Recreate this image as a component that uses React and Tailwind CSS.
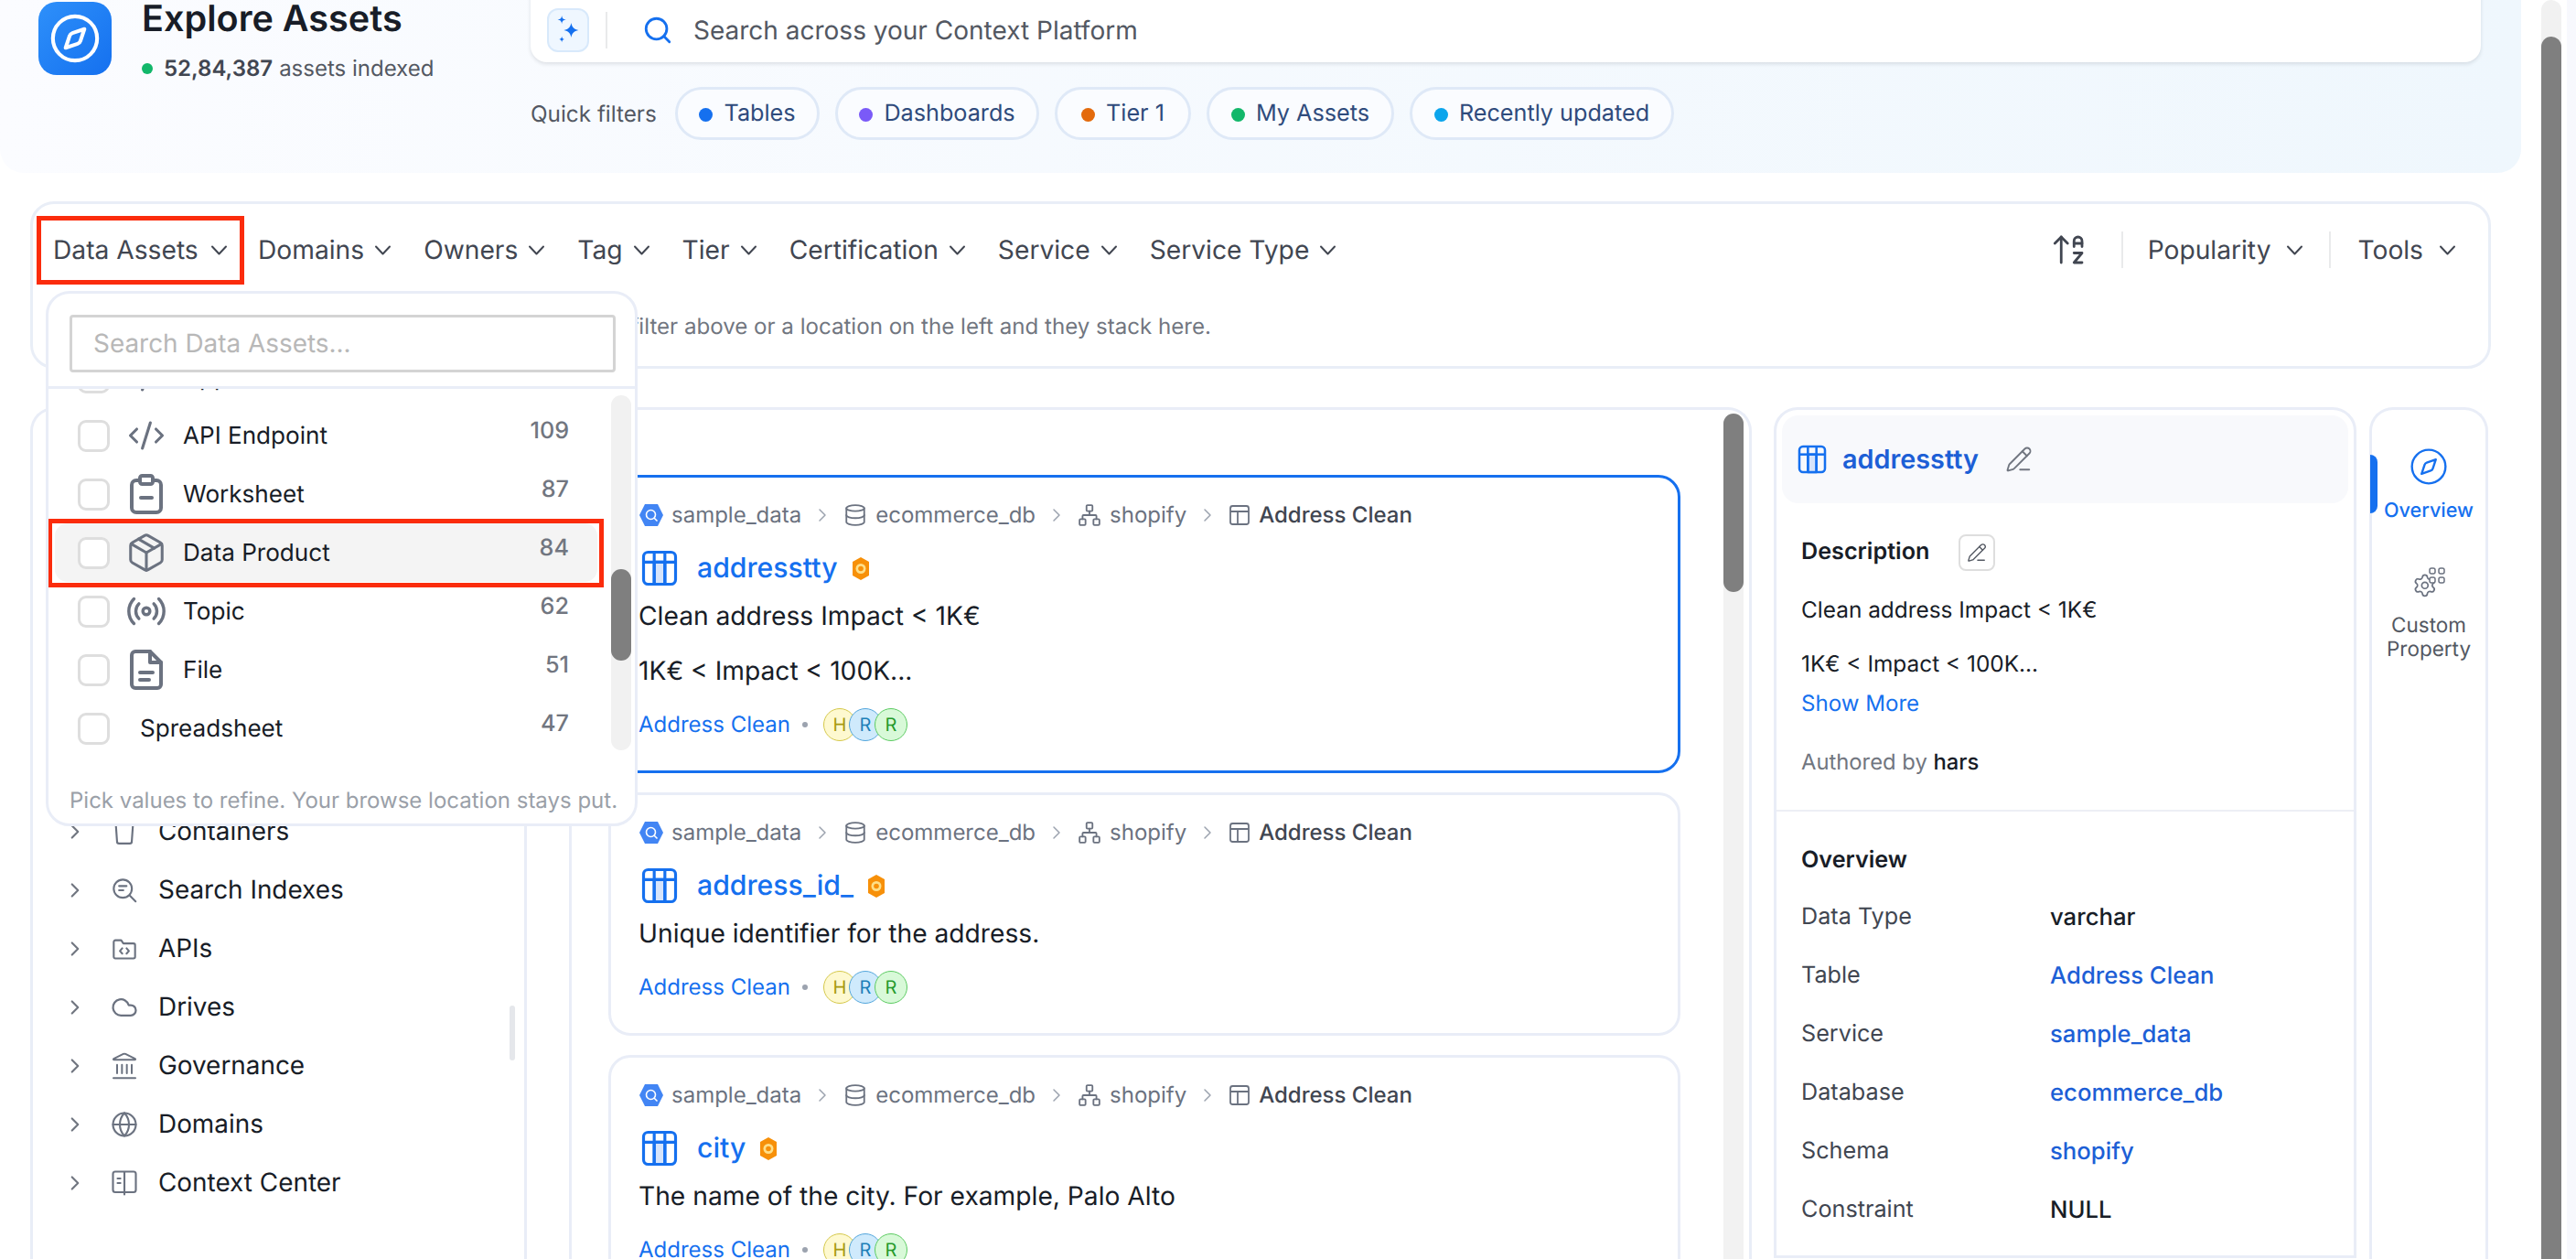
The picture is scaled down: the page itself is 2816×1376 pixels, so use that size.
import React from 'react'
import {
  ArrowUpAZ, ChevronRight, CodeXml, Package, Radio, Cloud, Landmark, Globe,
  Compass, Database, Network, PencilLine, Search,
} from 'lucide-react'

const PILLS = [
  { label: 'Tables', dot: 'bg-[#1570ef]', w: 'w-[158px]' },
  { label: 'Dashboards', dot: 'bg-[#7a5af8]', w: 'w-[223px]' },
  { label: 'Tier 1', dot: 'bg-[#e36a0c]', w: 'w-[149px]' },
  { label: 'My Assets', dot: 'bg-[#12b76a]', w: 'w-[205px]' },
  { label: 'Recently updated', dot: 'bg-[#0ba5ec]', w: 'w-[289px]' },
]

const FILTERS = ['Domains', 'Owners', 'Tag', 'Tier', 'Certification', 'Service', 'Service Type']

const OVERVIEW = [
  { k: 'Data Type', v: 'varchar' },
  { k: 'Table', v: 'Address Clean', link: true },
  { k: 'Service', v: 'sample_data', link: true },
  { k: 'Database', v: 'ecommerce_db', link: true },
  { k: 'Schema', v: 'shopify', link: true },
  { k: 'Constraint', v: 'NULL' },
]

function Caret() {
  return (
    <svg width="19" height="11" viewBox="0 0 19 11" fill="none" stroke="currentColor" strokeWidth="2" strokeLinecap="round" strokeLinejoin="round" className="shrink-0">
      <path d="M2 1.5l7.5 8 7.5-8" />
    </svg>
  )
}

function WorksheetIcon() {
  return (
    <svg width="36" height="44" viewBox="0 0 18 22" fill="none" stroke="#6b7280" strokeWidth="2" strokeLinecap="round" strokeLinejoin="round" className="shrink-0">
      <rect x="1" y="3.5" width="16" height="17.5" rx="2.5" />
      <rect x="5.5" y="1" width="7" height="4.5" rx="1.2" fill="#fff" />
      <path d="M6 13h6" />
    </svg>
  )
}

function FileIcon() {
  return (
    <svg width="36" height="44" viewBox="0 0 18 22" fill="none" stroke="#6b7280" strokeWidth="2" strokeLinecap="round" strokeLinejoin="round" className="shrink-0">
      <path d="M11 1H3a2 2 0 0 0-2 2v16a2 2 0 0 0 2 2h12a2 2 0 0 0 2-2V7z" />
      <path d="M11 1v6h6M5.500 12.500h7M5.500 16.500h5" />
    </svg>
  )
}

function BucketIcon() {
  return (
    <svg width="26" height="30" viewBox="0 0 24 28" fill="none" stroke="#6b7280" strokeWidth="2" strokeLinejoin="round">
      <path d="M3 3l1.5 21a2 2 0 0 0 2 2h11a2 2 0 0 0 2-2L21 3z" />
    </svg>
  )
}

function IndexIcon() {
  return (
    <svg width="28" height="28" viewBox="0 0 24 24" fill="none" stroke="#6b7280" strokeWidth="1.8" strokeLinecap="round">
      <circle cx="10.5" cy="10.5" r="8.5" />
      <path d="M7 8h7M7 12h4M17 17l5.5 5.5" />
    </svg>
  )
}

function FolderCodeIcon() {
  return (
    <svg width="28" height="28" viewBox="0 0 24 24" fill="none" stroke="#6b7280" strokeWidth="1.8" strokeLinecap="round" strokeLinejoin="round">
      <path d="M2 5.5a1.5 1.5 0 0 1 1.5-1.5H9l2 3h9.5A1.5 1.5 0 0 1 22 8.5v11a1.5 1.5 0 0 1-1.5 1.5h-17A1.5 1.5 0 0 1 2 19.5z" />
      <path d="M10 11.5L7.8 14l2.2 2.500M14 11.500l2.200 2.500-2.200 2.500" />
    </svg>
  )
}

function BookIcon() {
  return (
    <svg width="30" height="30" viewBox="0 0 24 24" fill="none" stroke="#6b7280" strokeWidth="1.7" strokeLinecap="round" strokeLinejoin="round">
      <path d="M12 4.500V22M12 20H4a2 2 0 0 1-2-2V4a2 2 0 0 1 2-2h8v2.500M12 4.500V2h8a2 2 0 0 1 2 2v14a2 2 0 0 1-2 2h-8" />
      <path d="M6 8h2.500M6 12h2.500" />
    </svg>
  )
}

function SparkIcon() {
  return (
    <svg width="28" height="32" viewBox="0 0 24 28" fill="#1570ef">
      <path d="M15 7c.7 4 2.500 6.200 7 7-4.500.8-6.300 3-7 7-.7-4-2.500-6.200-7-7 4.500-.8 6.300-3 7-7z" />
      <path d="M6 0c.4 2.700 1.300 3.600 4 4-2.700.4-3.600 1.300-4 4-.4-2.700-1.300-3.600-4-4 2.700-.4 3.600-1.300 4-4z" />
      <path d="M6 20c.3 1.800.9 2.400 2.500 2.800C6.900 23.100 6.300 23.700 6 25.500c-.3-1.800-.9-2.400-2.500-2.700C5.100 22.400 5.700 21.800 6 20z" />
    </svg>
  )
}

function ServiceIcon() {
  return (
    <svg width="28" height="26" viewBox="0 0 28 26" className="shrink-0">
      <polygon points="7,1 21,1 27,13 21,25 7,25 1,13" fill="#4285f4" />
      <circle cx="13.500" cy="12.500" r="5" fill="none" stroke="#fff" strokeWidth="1.600" />
      <path d="M17 16l3.500 3.500" stroke="#fff" strokeWidth="1.600" />
    </svg>
  )
}

function TableSmall() {
  return (
    <svg width="24" height="24" viewBox="0 0 24 24" fill="none" stroke="#6b7280" strokeWidth="1.800" strokeLinejoin="round" className="shrink-0">
      <rect x="2" y="2" width="20" height="20" rx="2.500" />
      <path d="M2 8h20M10 8v14" />
    </svg>
  )
}

function TableBlue({ w = 40, h = 40 }) {
  return (
    <svg width={w} height={h} viewBox="0 0 24 24" fill="none" stroke="#1570ef" strokeWidth="1.900" strokeLinejoin="round" className="shrink-0">
      <rect x="1.500" y="1.500" width="21" height="21" rx="3" />
      <path d="M1.500 8h21" />
      <path d="M8.500 8h7v14.500h-7z" fill="#d6e4fb" />
      <path d="M8.500 1.500v21M15.500 1.500v21" />
    </svg>
  )
}

function TierBadge() {
  return (
    <svg width="20" height="25" viewBox="0 0 20 25" className="shrink-0">
      <polygon points="10,0 19,5 19,20 10,25 1,20 1,5" fill="#f79009" />
      <circle cx="10" cy="12.500" r="5.500" fill="#fedf89" />
      <circle cx="10" cy="12.500" r="2.800" fill="#f79009" />
    </svg>
  )
}

function CustomPropIcon() {
  return (
    <svg width="36" height="34" viewBox="0 0 36 34" fill="none" stroke="#6b7280" strokeWidth="1.500" strokeLinejoin="round">
      <g transform="translate(0 6) scale(1.150)">
        <path d="M9.671 4.136a2.340 2.340 0 0 1 4.659 0 2.340 2.340 0 0 0 3.319 1.915 2.340 2.340 0 0 1 2.330 4.033 2.340 2.340 0 0 0 0 3.831 2.340 2.340 0 0 1-2.330 4.033 2.340 2.340 0 0 0-3.319 1.915 2.340 2.340 0 0 1-4.659 0 2.340 2.340 0 0 0-3.320-1.915 2.340 2.340 0 0 1-2.330-4.033 2.340 2.340 0 0 0 0-3.831A2.340 2.340 0 0 1 6.350 6.051a2.340 2.340 0 0 0 3.319-1.915" fill="#fff" />
        <circle cx="12" cy="12" r="3" />
      </g>
      <rect x="19" y="1" width="6" height="6" rx="2" fill="#fff" />
      <rect x="29" y="1" width="6" height="6" rx="2" fill="#fff" />
      <rect x="19" y="11" width="6" height="6" rx="2" fill="#fff" />
      <rect x="29" y="11" width="6" height="6" rx="2" fill="#fff" />
    </svg>
  )
}

const DROPDOWN_ROWS = [
  { label: 'Apps', count: '', icon: <CodeXml size={42} color="#6b7280" strokeWidth={1.8} className="shrink-0" /> },
  { label: 'API Endpoint', count: '109', icon: <CodeXml size={42} color="#6b7280" strokeWidth={1.8} className="shrink-0" /> },
  { label: 'Worksheet', count: '87', icon: <WorksheetIcon /> },
  { label: 'Data Product', count: '84', icon: <Package size={46} color="#6b7280" strokeWidth={1.6} className="shrink-0" />, hot: true },
  { label: 'Topic', count: '62', icon: <Radio size={46} color="#6b7280" strokeWidth={1.8} className="shrink-0" /> },
  { label: 'File', count: '51', icon: <FileIcon /> },
  { label: 'Spreadsheet', count: '47' },
]

const TREE = [
  { label: 'Databases', icon: <Database size={28} color="#6b7280" strokeWidth={1.8} /> },
  { label: 'Dashboards', icon: <Database size={28} color="#6b7280" strokeWidth={1.8} /> },
  { label: 'Pipelines', icon: <Database size={28} color="#6b7280" strokeWidth={1.8} /> },
  { label: 'Topics', icon: <Radio size={28} color="#6b7280" strokeWidth={1.8} /> },
  { label: 'ML Models', icon: <Database size={28} color="#6b7280" strokeWidth={1.8} /> },
  { label: 'Metrics', icon: <Database size={28} color="#6b7280" strokeWidth={1.8} /> },
  { label: 'Containers', icon: <BucketIcon /> },
  { label: 'Search Indexes', icon: <IndexIcon /> },
  { label: 'APIs', icon: <FolderCodeIcon /> },
  { label: 'Drives', icon: <Cloud size={30} color="#6b7280" strokeWidth={1.8} /> },
  { label: 'Governance', icon: <Landmark size={32} color="#6b7280" strokeWidth={1.5} /> },
  { label: 'Domains', icon: <Globe size={30} color="#6b7280" strokeWidth={1.7} /> },
  { label: 'Context Center', icon: <BookIcon /> },
]

const CARDS = [
  { title: 'addresstty', lines: ['Clean address Impact < 1K€', '1K€ < Impact < 100K...'], active: true },
  { title: 'address_id_', lines: ['Unique identifier for the address.'] },
  { title: 'city', lines: ['The name of the city. For example, Palo Alto'] },
]

function Crumbs() {
  const sep = <ChevronRight size={24} color="#9ca3af" strokeWidth={1.5} className="mx-[11px] shrink-0" />
  return (
    <div className="flex items-center h-[28px] text-[24px] text-[#6b7280]">
      <ServiceIcon />
      <span className="ml-[8px]">sample_data</span>
      {sep}
      <Database size={26} color="#6b7280" strokeWidth={1.700} />
      <span className="ml-[9px]">ecommerce_db</span>
      {sep}
      <Network size={26} color="#6b7280" strokeWidth={1.700} />
      <span className="ml-[9px]">shopify</span>
      {sep}
      <TableSmall />
      <span className="ml-[9px] font-medium text-[#414651]">Address Clean</span>
    </div>
  )
}

function Avatars() {
  return (
    <div className="flex ml-[17px]">
      <span className="flex items-center justify-center w-[36px] h-[36px] rounded-full border border-[#d5c84a] bg-[#fef9d0] text-[20px] text-[#a89a12]">H</span>
      <span className="flex items-center justify-center w-[36px] h-[36px] -ml-[8px] rounded-full border border-[#53a6dc] bg-[#cfeafc] text-[20px] text-[#1c7fb8]">R</span>
      <span className="flex items-center justify-center w-[36px] h-[36px] -ml-[8px] rounded-full border border-[#5ccb62] bg-[#d8f9d8] text-[20px] text-[#249a2b]">R</span>
    </div>
  )
}

function AssetCard({ card }) {
  return (
    <div className={`shrink-0 rounded-[24px] pl-[30px] pt-[27px] pb-[32px] ${card.active ? 'border-[3px] border-[#1570ef]' : 'border-[3px] border-[#e9edf7]'}`}>
      <Crumbs />
      <div className="flex items-center mt-[24px] h-[40px]">
        <span className="ml-[3px]"><TableBlue /></span>
        <span className="ml-[21px] text-[30.200px] font-medium text-[#1570ef] leading-none">{card.title}</span>
        <span className="ml-[15px]"><TierBadge /></span>
      </div>
      <div className="mt-[14px] text-[28.200px] leading-[36px] text-[#181d27]">
        {card.lines.map((l, i) => (
          <p key={i} className={i > 0 ? 'mt-[24px]' : ''}>{l}</p>
        ))}
      </div>
      <div className="flex items-center mt-[23px] h-[36px]">
        <span className="text-[24px] text-[#1570ef]">Address Clean</span>
        <span className="ml-[13px] w-[6px] h-[6px] rounded-full bg-[#9ca3af]" />
        <Avatars />
      </div>
    </div>
  )
}

function DataAssetsDropdown() {
  return (
    <div className="absolute left-[50px] top-[318px] w-[647px] h-[585px] flex flex-col bg-white border-[3px] border-[#e9edf7] rounded-[26px] overflow-hidden">
      <div className="shrink-0 h-[104px] pl-[23px] pr-[21px] pt-[23px] border-b-[3px] border-[#e9edf7]">
        <div className="h-[63px] flex items-center pl-[23px] border-[3px] border-[#d4d4d4] rounded-[4px] text-[27.900px] text-[#b8b8b8]">
          Search Data Assets...
        </div>
      </div>
      <div className="flex flex-1 min-h-0 overflow-hidden">
        <div className="shrink-0 w-[615px] -mt-[45px] pl-[7px] pr-[15px] flex flex-col">
          {DROPDOWN_ROWS.map((r) => (
            <div key={r.label} className={`relative shrink-0 h-[64px] flex items-center pl-[25px] pr-[31px] rounded-[14px] ${r.hot ? 'bg-[#f4f4f4]' : ''}`}>
              {r.hot && <span className="absolute -left-[8px] -right-[7px] -top-[5px] -bottom-[6px] border-[5px] border-[#fb2c0c]" />}
              <span className="shrink-0 w-[35px] h-[35px] rounded-[9px] border-[3px] border-[#dedede] bg-white" />
              {r.icon
                ? <span className="shrink-0 w-[36px] ml-[22px] mr-[22px] flex justify-center">{r.icon}</span>
                : <span className="shrink-0 w-[33px]" />}
              <span className="mt-[2px] text-[26.100px] text-[#181d27]">{r.label}</span>
              <span className="ml-auto -mt-[8px] text-[25.200px] font-medium text-[#717680]">{r.count}</span>
            </div>
          ))}
        </div>
        <div className="relative shrink-0 w-[22px] h-[388px] mt-[7px] rounded-full bg-[#f1f1f1]">
          <span className="absolute top-[190px] left-0 w-[22px] h-[100px] rounded-full bg-[#7f7f7f]" />
        </div>
      </div>
      <div className="shrink-0 h-[60px] pt-[10px] flex items-center pl-[23px] text-[24px] text-[#9a9fa8] whitespace-nowrap">
        Pick values to refine. Your browse location stays put.
      </div>
    </div>
  )
}

export default function App() {
  return (
    <div className="relative flex w-[2816px] h-[1376px] overflow-hidden bg-white font-[Inter,sans-serif] [text-rendering:geometricPrecision]">
      <div className="flex-1 min-w-0 -mt-[20px]">
        {/* Hero */}
        <div className="flex w-[2756px] h-[209px] pl-[42px] rounded-b-[26px] bg-gradient-to-r from-[#fbfcff] to-[#eff7fd]">
          <div className="shrink-0 w-[538px] flex mt-[22px]">
            <div className="shrink-0 w-[80px] h-[80px] flex items-center justify-center rounded-[20px] bg-gradient-to-br from-[#2e90fa] to-[#1570ef]">
              <Compass size={58} color="#fff" strokeWidth={1.700} />
            </div>
            <div className="ml-[33px] -mt-[6px]">
              <div className="text-[39.600px] leading-[48px] font-semibold text-[#181d27]">Explore Assets</div>
              <div className="flex items-center mt-[16px] h-[30px] text-[24px] text-[#535862]">
                <span className="w-[12px] h-[12px] rounded-full bg-[#12b76a]" />
                <span className="ml-[12px] font-semibold text-[#414651]">52,84,387</span>
                <span className="ml-[7px]">assets indexed</span>
              </div>
            </div>
          </div>
          <div className="flex-1 pr-[44px]">
            <div className="flex items-center h-[88px] pt-[17px] pl-[18px] bg-white rounded-b-[18px] shadow-[0_2px_4px_rgba(16,24,40,0.12)]">
              <span className="flex items-center justify-center w-[46px] h-[48px] rounded-[12px] border-2 border-[#d8e9fb] bg-[#eff7ff]"><SparkIcon /></span>
              <span className="ml-[18px] w-[2px] h-[40px] bg-[#e9eaeb]" />
              <Search size={34} color="#1570ef" strokeWidth={2} className="ml-[38px]" />
              <span className="ml-[22px] text-[28px] text-[#535862]">Search across your Context Platform</span>
            </div>
            <div className="flex items-center mt-[27px]">
              <span className="w-[158px] text-[24.300px] text-[#535862]">Quick filters</span>
              <div className="flex gap-[17px]">
                {PILLS.map((p) => (
                  <div key={p.label} className={`flex items-center justify-center gap-[12px] h-[58px] pt-[2px] rounded-full border-[3px] border-[#dfe9f7] bg-[#fafcff] text-[25.200px] text-[#2f4b7c] ${p.w}`}>
                    <span className={`w-[15px] h-[15px] rounded-full ${p.dot}`} />
                    {p.label}
                  </div>
                ))}
              </div>
            </div>
          </div>
        </div>

        {/* Filter bar */}
        <div className="ml-[33px] w-[2690px] h-[183px] mt-[31px] border-[3px] border-[#e9eef7] rounded-[26px] text-[#414651]">
          <div className="flex items-center h-[75px] mt-[13px] pl-[4px] pr-[35px] text-[28.200px]">
            <div className="shrink-0 w-[227px] h-[75px] flex items-center gap-[13px] pl-[13px] border-[5px] border-[#fb2c0c] whitespace-nowrap">
              Data Assets <Caret />
            </div>
            <div className="flex items-center gap-[35px] ml-[15px]">
              {FILTERS.map((f) => (
                <div key={f} className="flex items-center gap-[11px]">{f} <Caret /></div>
              ))}
            </div>
            <div className="ml-auto flex items-center">
              <ArrowUpAZ size={42} color="#414651" strokeWidth={1.600} />
              <span className="ml-[36px] w-[2px] h-[40px] bg-[#e9eaeb]" />
              <div className="ml-[27px] flex items-center gap-[17px]">Popularity <Caret /></div>
              <span className="ml-[28px] w-[2px] h-[40px] bg-[#e9eaeb]" />
              <div className="ml-[29px] flex items-center gap-[17px]">Tools <Caret /></div>
            </div>
          </div>
          <div className="w-[1288px] mt-[28px] text-right text-[24.100px] text-[#717680] whitespace-nowrap">
            No filters applied yet. Pick a value from a filter above or a location on the left and they stack here.
          </div>
        </div>

        {/* Panels */}
        <div className="flex items-start ml-[33px] mt-[42px] h-[960px]">
          {/* Browse tree */}
          <div className="relative shrink-0 w-[543px] h-full pt-[45px] pl-[40px] border-[3px] border-b-0 border-[#e9edf7] rounded-t-[26px] overflow-hidden">
            {TREE.map((t) => (
              <div key={t.label} className="flex items-center h-[64px] text-[27.900px] text-[#181d27]">
                <ChevronRight size={26} color="#717680" strokeWidth={2} className="-ml-[7px]" />
                <span className="ml-[17px] w-[48px] flex justify-center">{t.icon}</span>
                <span className="ml-[13px]">{t.label}</span>
              </div>
            ))}
            <span className="absolute left-[521px] top-[651px] w-[6px] h-[60px] rounded-full bg-[#e5e7eb]" />
          </div>

          {/* Results */}
          <div className="shrink-0 w-[1293px] h-full ml-[46px] flex border-[3px] border-b-0 border-[#e9edf7] rounded-t-[26px] overflow-hidden">
            <div className="shrink-0 w-[1172px] ml-[40px] pt-[71px] flex flex-col gap-[21px]">
              {CARDS.map((c) => <AssetCard key={c.title} card={c} />)}
            </div>
            <div className="relative shrink-0 w-[22px] ml-[47px] mt-[4px] rounded-t-full bg-[#f2f2f2]">
              <span className="absolute top-0 left-0 w-[22px] h-[195px] rounded-full bg-[#7f7f7f]" />
            </div>
          </div>

          {/* Detail */}
          <div className="shrink-0 w-[637px] h-[930px] ml-[24px] pt-[6px] border-[3px] border-[#e9edf7] rounded-t-[26px]">
            <div className="flex items-center h-[96px] mx-[6px] pl-[17px] rounded-[18px] bg-[#f8f9fc]">
              <TableBlue w={32} h={32} />
              <span className="ml-[17px] text-[28.800px] font-semibold text-[#1d5fd6]">addresstty</span>
              <PencilLine size={30} color="#717680" strokeWidth={1.500} className="ml-[29px]" />
            </div>
            <div className="pl-[27px] pt-[34px]">
              <div className="flex items-center h-[40px]">
                <span className="text-[25.200px] font-semibold text-[#181d27]">Description</span>
                <span className="ml-[32px] w-[40px] h-[40px] flex items-center justify-center rounded-[8px] border-2 border-[#dedede]">
                  <PencilLine size={22} color="#535862" strokeWidth={1.500} />
                </span>
              </div>
              <p className="mt-[26px] text-[24.400px] leading-[32px] text-[#181d27]">Clean address Impact &lt; 1K€</p>
              <p className="mt-[27px] text-[24.400px] leading-[32px] text-[#181d27]">1K€ &lt; Impact &lt; 100K...</p>
              <p className="mt-[12px] text-[24.100px] leading-[32px] text-[#1570ef]">Show More</p>
              <p className="mt-[32px] text-[23.800px] leading-[32px] text-[#717680]">Authored by <span className="font-medium text-[#181d27]">hars</span></p>
            </div>
            <div className="mt-[36px] pt-[35px] pl-[27px] border-t-2 border-[#edeff5]">
              <div className="h-[36px] text-[25.200px] leading-[36px] font-semibold text-[#181d27]">Overview</div>
              <div className="mt-[13px]">
                {OVERVIEW.map((o) => (
                  <div key={o.k} className="flex items-center h-[64px] text-[25.200px]">
                    <span className="w-[272px] text-[#414651]">{o.k}</span>
                    <span className={`text-[25.700px] font-medium ${o.link ? 'text-[#1d5fd6]' : 'text-[#181d27]'}`}>{o.v}</span>
                  </div>
                ))}
              </div>
            </div>
          </div>

          {/* Tabs */}
          <div className="relative shrink-0 w-[130px] h-full ml-[14px] pt-[40px] flex flex-col items-center border-[3px] border-b-0 border-[#e9edf7] rounded-t-[26px]">
            <span className="absolute -left-[2px] top-[49px] w-[8px] h-[64px] rounded-r-[8px] bg-[#1570ef]" />
            <Compass size={44} color="#1570ef" strokeWidth={1.300} />
            <span className="mt-[10px] text-[21.600px] font-medium text-[#1570ef]">Overview</span>
            <span className="mt-[46px]"><CustomPropIcon /></span>
            <span className="mt-[17px] text-center text-[22.500px] leading-[26px] text-[#535862]">Custom<br />Property</span>
          </div>
        </div>
      </div>

      {/* Page scrollbar */}
      <div className="shrink-0 w-[22px] bg-[#f1f1f1] pt-[40px] rounded-t-full">
        <div className="h-[1336px] rounded-t-full bg-[#7f7f7f]" />
      </div>
      <div className="shrink-0 w-[6px] bg-white" />
      <div className="shrink-0 w-[10px] bg-[#f7f8fd]" />

      <DataAssetsDropdown />
    </div>
  )
}
